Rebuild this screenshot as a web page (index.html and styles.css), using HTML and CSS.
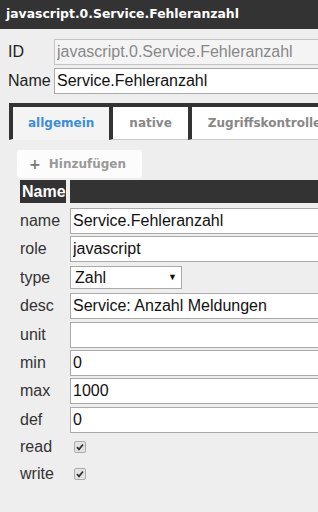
FILE: index.html
```html
<!DOCTYPE HTML>
<html>
  <head>
    <meta http-equiv="content-type" content="text/html; charset=utf-8">
    <title>javascript.0.Service.Fehleranzahl</title>
    <link rel="stylesheet" href="styles.css">
  </head>
  <body>
    <div class="titleBar">javascript.0.Service.Fehleranzahl</div>

    <div class="headFields">
      <label class="headLabel">ID</label>
      <input class="editText idText" type="text" value="javascript.0.Service.Fehleranzahl" disabled>
      <label class="headLabel">Name</label>
      <input class="editText" type="text" value="Service.Fehleranzahl">
    </div>

    <div class="tabs">
      <ul class="tabList">
        <li class="tab tabActive">allgemein</li>
        <li class="tab">native</li>
        <li class="tab">Zugriffskontrolle</li>
      </ul>

      <div class="tabPanel">
        <button class="addButton" type="button"><span class="plus">+</span>Hinzufügen</button>

        <div class="propTable">
          <div class="headCell">Name</div>
          <div class="headCell"></div>

          <div class="propLabel">name</div>
          <div class="propValue"><input class="editText" type="text" value="Service.Fehleranzahl"></div>

          <div class="propLabel">role</div>
          <div class="propValue"><input class="editText" type="text" value="javascript"></div>

          <div class="propLabel">type</div>
          <div class="propValue">
            <div class="selectBox">Zahl<span class="arrow">&#9660;</span></div>
          </div>

          <div class="propLabel">desc</div>
          <div class="propValue"><input class="editText" type="text" value="Service: Anzahl Meldungen"></div>

          <div class="propLabel">unit</div>
          <div class="propValue"><input class="editText" type="text" value=""></div>

          <div class="propLabel">min</div>
          <div class="propValue"><input class="editText" type="text" value="0"></div>

          <div class="propLabel">max</div>
          <div class="propValue"><input class="editText" type="text" value="1000"></div>

          <div class="propLabel">def</div>
          <div class="propValue"><input class="editText" type="text" value="0"></div>

          <div class="propLabel checkRow">read</div>
          <div class="propValue checkRow">
            <span class="checkBox">
              <svg width="8" height="8" viewBox="0 0 8 8"><path d="M1 4.2 L3 6.3 L7 1.5" fill="none" stroke="#333" stroke-width="1.8"/></svg>
            </span>
          </div>

          <div class="propLabel checkRow">write</div>
          <div class="propValue checkRow">
            <span class="checkBox">
              <svg width="8" height="8" viewBox="0 0 8 8"><path d="M1 4.2 L3 6.3 L7 1.5" fill="none" stroke="#333" stroke-width="1.8"/></svg>
            </span>
          </div>
        </div>
      </div>
    </div>
  </body>
</html>
```

FILE: styles.css
```css
body {
  margin: 0;
  background-color: #eeeeee;
  color: #222;
  font-family: "Liberation Sans", Arial, sans-serif;
  font-size: 16px;
  width: 318px;
  height: 512px;
  overflow: hidden;
}

.titleBar {
  height: 29px;
  line-height: 28px;
  padding: 0 6px;
  background-color: #333;
  color: #fff;
  font-family: "DejaVu Sans", Verdana, sans-serif;
  font-weight: bold;
  font-size: 12.4px;
  white-space: nowrap;
}

.headFields {
  display: grid;
  grid-template-columns: 46px 320px;
  row-gap: 3px;
  align-items: center;
  padding: 10px 0 0 8px;
}

.headLabel {
  color: #222;
}

.editText {
  box-sizing: border-box;
  width: 320px;
  height: 26px;
  margin: 0;
  padding: 0 2px;
  border: 1px solid #aaa;
  background-color: #fff;
  color: #111;
  font-family: "Liberation Sans", Arial, sans-serif;
  font-size: 16px;
  outline: none;
}

.idText {
  background-color: #f4f4f4;
  color: #888;
  border-color: #c4c4c4;
}

.tabs {
  margin: 9px 0 0 9px;
  border-top: 4px solid #333;
}

.tabList {
  display: flex;
  margin: 0;
  padding: 0;
  list-style: none;
  white-space: nowrap;
}

.tab {
  flex: none;
  height: 32px;
  line-height: 32px;
  padding: 0 16px;
  border-left: 4px solid #333;
  border-bottom: 1px solid #ccc;
  background-color: #fff;
  color: #888;
  font-family: "DejaVu Sans", Verdana, sans-serif;
  font-weight: bold;
  font-size: 12px;
}

.tabActive {
  padding: 0 15px;
  background-color: #f4f4f4;
  border-bottom-color: #f4f4f4;
  color: #3a8ee0;
}

.tabPanel {
  padding: 10px 0 0 8px;
}

.addButton {
  display: flex;
  align-items: center;
  box-sizing: border-box;
  width: 125px;
  height: 28px;
  padding: 0 0 0 12px;
  border: none;
  border-radius: 3px;
  background-color: #fcfcfc;
  color: #999;
  font-family: "DejaVu Sans", Verdana, sans-serif;
  font-weight: bold;
  font-size: 12px;
}

.plus {
  color: #777;
  font-size: 14px;
  margin-right: 8px;
}

.propTable {
  display: grid;
  grid-template-columns: 46px 260px;
  column-gap: 4px;
  row-gap: 2.4px;
  margin: 2px 0 0 3px;
  align-items: center;
}

.headCell {
  height: 23px;
  line-height: 23px;
  padding-left: 2px;
  margin-bottom: 2.6px;
  background-color: #333;
  color: #fff;
  font-weight: bold;
  font-size: 16px;
}

.propLabel {
  color: #333;
  line-height: 26px;
}

.propValue {
  height: 26px;
  display: flex;
  align-items: center;
}

.selectBox {
  box-sizing: border-box;
  position: relative;
  width: 112px;
  height: 23px;
  line-height: 21px;
  padding-left: 4px;
  border: 1px solid #aaa;
  background-color: #fff;
  color: #111;
}

.arrow {
  position: absolute;
  right: 4px;
  top: 0;
  font-size: 9px;
  color: #111;
}

.checkRow {
  height: 24.6px;
  line-height: 24.6px;
}

.checkBox {
  box-sizing: border-box;
  display: flex;
  align-items: center;
  justify-content: center;
  width: 12px;
  height: 12px;
  margin-left: 4px;
  border: 1px solid #aaa;
  border-radius: 2px;
  background-color: #e4e4e4;
}
```
